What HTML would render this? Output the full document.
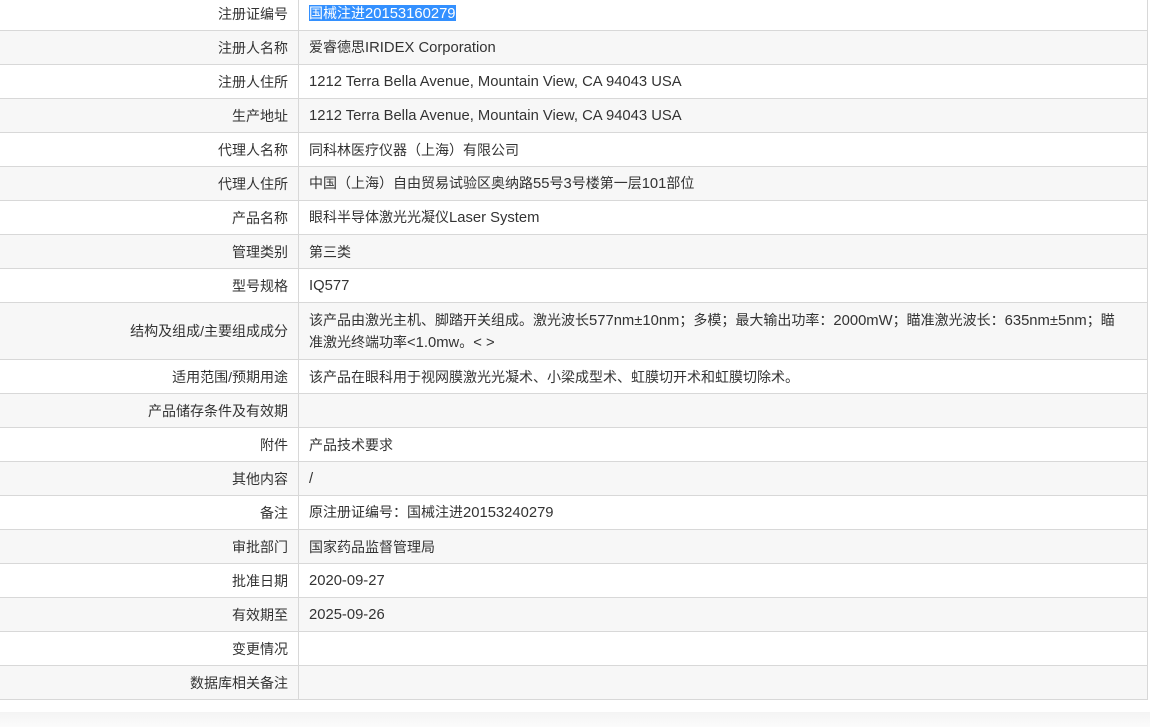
<!DOCTYPE html>
<html><head><meta charset="utf-8"><style>
html,body{margin:0;padding:0;width:1150px;height:727px;overflow:hidden;background:#fff;font-family:"Liberation Sans","Noto Sans CJK SC",sans-serif;font-size:14px;color:#333}
table{position:absolute;left:-1px;top:-4px;width:1149px;border-collapse:collapse}
td{border:1px solid #d8d8d8;height:32px;padding:1px 0 0 0;line-height:21px}
tr:nth-child(even) td{background:#f7f7f7}
td.l{width:288px;text-align:right;padding-right:10px}
td.v{padding-left:10px;padding-right:14px}
.e{font-size:14.8px}
.sel{background:#3390ff;color:#fff}
.sh{position:absolute;left:0;top:712px;width:1150px;height:15px;background:linear-gradient(#f4f4f4,#fbfbfb)}
</style></head><body>
<table>
<tr><td class="l">注册证编号</td><td class="v"><span class="sel">国械注进<span class="e">20153160279</span></span></td></tr>
<tr><td class="l">注册人名称</td><td class="v">爱睿德思<span class="e">IRIDEX Corporation</span></td></tr>
<tr><td class="l">注册人住所</td><td class="v"><span class="e">1212 Terra Bella Avenue, Mountain View, CA 94043 USA</span></td></tr>
<tr><td class="l">生产地址</td><td class="v"><span class="e">1212 Terra Bella Avenue, Mountain View, CA 94043 USA</span></td></tr>
<tr><td class="l">代理人名称</td><td class="v">同科林医疗仪器（上海）有限公司</td></tr>
<tr><td class="l">代理人住所</td><td class="v">中国（上海）自由贸易试验区奥纳路<span class="e">55</span>号<span class="e">3</span>号楼第一层<span class="e">101</span>部位</td></tr>
<tr><td class="l">产品名称</td><td class="v">眼科半导体激光光凝仪<span class="e">Laser System</span></td></tr>
<tr><td class="l">管理类别</td><td class="v">第三类</td></tr>
<tr><td class="l">型号规格</td><td class="v"><span class="e">IQ577</span></td></tr>
<tr><td class="l" style="height:55px">结构及组成/主要组成成分</td><td class="v">该产品由激光主机、脚踏开关组成。激光波长<span class="e">577nm±10nm</span>；多模；最大输出功率：<span class="e">2000mW</span>；瞄准激光波长：<span class="e">635nm±5nm</span>；瞄<br>准激光终端功率<span class="e">&lt;1.0mw</span>。<span class="e">&lt; &gt;</span></td></tr>
<tr><td class="l">适用范围/预期用途</td><td class="v">该产品在眼科用于视网膜激光光凝术、小梁成型术、虹膜切开术和虹膜切除术。</td></tr>
<tr><td class="l">产品储存条件及有效期</td><td class="v"></td></tr>
<tr><td class="l">附件</td><td class="v">产品技术要求</td></tr>
<tr><td class="l">其他内容</td><td class="v"><span class="e">/</span></td></tr>
<tr><td class="l">备注</td><td class="v">原注册证编号：国械注进<span class="e">20153240279</span></td></tr>
<tr><td class="l">审批部门</td><td class="v">国家药品监督管理局</td></tr>
<tr><td class="l">批准日期</td><td class="v"><span class="e">2020-09-27</span></td></tr>
<tr><td class="l">有效期至</td><td class="v"><span class="e">2025-09-26</span></td></tr>
<tr><td class="l">变更情况</td><td class="v"></td></tr>
<tr><td class="l">数据库相关备注</td><td class="v"></td></tr>
</table>
<div class="sh"></div>
</body></html>
